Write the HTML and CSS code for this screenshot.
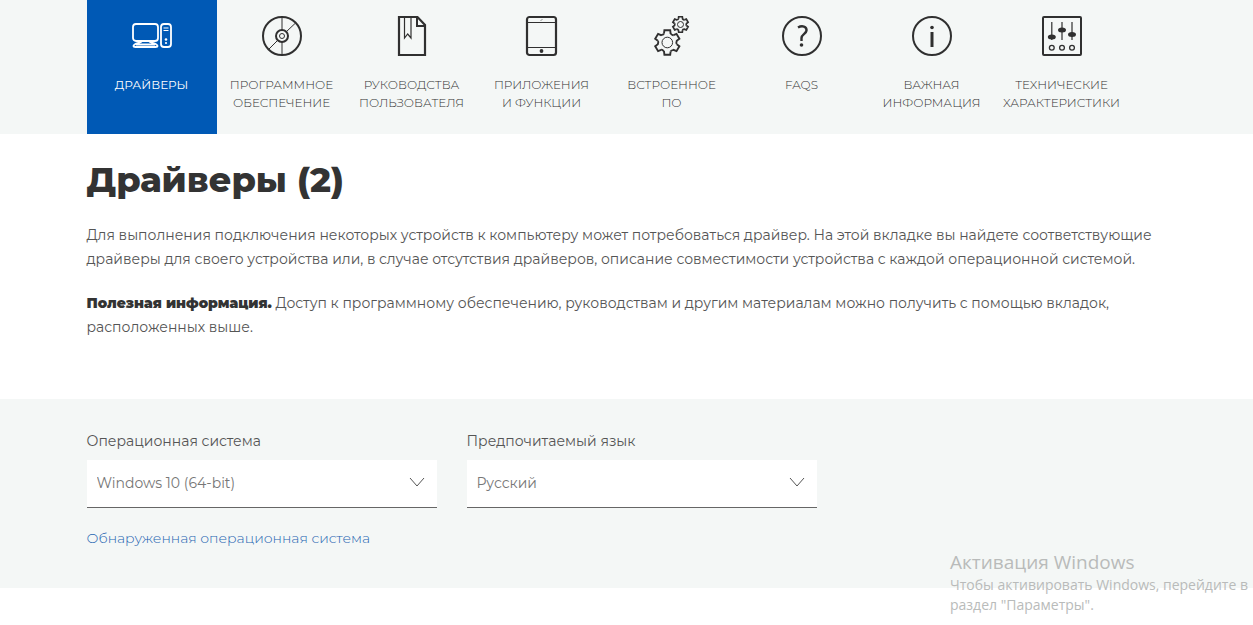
FILE: index.html
```html
<!DOCTYPE html>
<html lang="ru">
<head>
<meta charset="utf-8">
<meta name="viewport" content="width=device-width, initial-scale=1">
<title>Драйверы</title>
<link rel="stylesheet" href="styles.css">
</head>
<body>
<nav class="tabs">
  <div class="container tabs-row">
    <a class="tab tab-active" href="#drivers" aria-current="page">
      <svg class="icon" viewBox="0 0 40 40" aria-hidden="true"><g stroke-width="1.8"><rect x="1" y="8" width="25" height="17" rx="3"/><path d="M10 25c-1 2-8 2-8.500 5 0 1 1 1 2 1h20c1 0 2 0 2-1-.5-3-7.500-3-8.500-5M4 28.500h19"/><rect x="29" y="8" width="10" height="23" rx="3"/></g><path d="M31.500 12h5M31.500 14.500h5" stroke-width="1.200"/><circle class="solid" cx="34" cy="23.500" r="1.300"/><circle class="solid" cx="34" cy="27" r="1.100"/></svg>
      <span>Драйверы</span>
    </a>
    <a class="tab" href="#software">
      <svg class="icon" viewBox="0 0 40 40" aria-hidden="true"><circle cx="20" cy="20" r="19" stroke-width="2"/><circle cx="20" cy="20" r="6" stroke-width="2"/><circle cx="20" cy="20" r="2.500" stroke-width="1"/><path d="M20 1v13M20 26v13M33 7.500l-9 8.500M16 24l-9 9" stroke-width="1"/></svg>
      <span>Программное<br>обеспечение</span>
    </a>
    <a class="tab" href="#manuals">
      <svg class="icon" viewBox="0 0 40 40" aria-hidden="true"><path d="M7 1h18.500l7.500 8v30H7z" stroke-width="2.200"/><path d="M25 1v9h8" stroke-width="2"/><path d="M12.500 2v20l3.200-4 3.300 4V2" stroke-width="1.200"/></svg>
      <span>Руководства<br>пользователя</span>
    </a>
    <a class="tab" href="#apps">
      <svg class="icon" viewBox="0 0 40 40" aria-hidden="true"><rect x="5" y="1" width="29" height="38" rx="2.500" stroke-width="2.200"/><path d="M6 6.500h28M6 31.500h28" stroke-width="1"/><path d="M19 4.500l1-1" stroke-width="1"/><circle class="solid" cx="19.500" cy="35" r="1.900"/></svg>
      <span>Приложения<br>и функции</span>
    </a>
    <a class="tab" href="#firmware">
      <svg class="icon" viewBox="0 0 40 40" aria-hidden="true">
        <defs><path id="tooth" d="M-3.300-9L-2.900-12.300H2.900L3.300-9Q5-7 6.140-7.360"/>
        <g id="gear"><use href="#tooth"/><use href="#tooth" transform="rotate(60)"/><use href="#tooth" transform="rotate(120)"/><use href="#tooth" transform="rotate(180)"/><use href="#tooth" transform="rotate(240)"/><use href="#tooth" transform="rotate(300)"/></g></defs>
        <g transform="translate(15.300 26.500)"><use href="#gear" stroke-width="1.900"/><circle r="5.300" stroke-width="1"/></g>
        <g transform="translate(28.500 8.500)"><use href="#gear" transform="scale(.63)" stroke-width="2.700"/><circle r="3" stroke-width="1"/></g>
      </svg>
      <span>Встроенное<br>ПО</span>
    </a>
    <a class="tab" href="#faqs">
      <svg class="icon" viewBox="0 0 40 40" aria-hidden="true"><circle cx="20" cy="20" r="19" stroke-width="2"/><path d="M16 11.500c4-2.300 9-1.200 8.500 3-.4 3.500-5 4-5 7.500V25" stroke-width="2.400"/><circle class="solid" cx="19.500" cy="29" r="1.800"/></svg>
      <span>FAQs</span>
    </a>
    <a class="tab" href="#important">
      <svg class="icon" viewBox="0 0 40 40" aria-hidden="true"><circle cx="20" cy="20" r="19" stroke-width="2"/><path d="M20 16v15" stroke-width="3"/><circle class="solid" cx="20" cy="11.500" r="1.800"/></svg>
      <span>Важная<br>информация</span>
    </a>
    <a class="tab" href="#specs">
      <svg class="icon" viewBox="0 0 40 40" aria-hidden="true"><rect x="1" y="1" width="38" height="38" rx="1" stroke-width="2"/><path d="M9.800 6v18M20 6v18M30 6v18" stroke-width="1.200"/><g class="solid"><ellipse cx="9.800" cy="21" rx="4" ry="2.500"/><ellipse cx="20" cy="14" rx="4" ry="2.500"/><ellipse cx="30" cy="18.500" rx="4" ry="2.500"/></g><g stroke-width="1.300"><circle cx="9.800" cy="31.700" r="2.400"/><circle cx="20" cy="31.700" r="2.400"/><circle cx="30" cy="31.700" r="2.400"/></g></svg>
      <span>Технические<br>характеристики</span>
    </a>
  </div>
</nav>
<main>
  <section class="container intro" id="drivers">
    <h1>Драйверы (2)</h1>
    <p>Для выполнения подключения некоторых устройств к компьютеру может потребоваться драйвер. На этой вкладке вы найдете соответствующие драйверы для своего устройства или, в случае отсутствия драйверов, описание совместимости устройства с каждой операционной системой.</p>
    <p><strong>Полезная информация.</strong> Доступ к программному обеспечению, руководствам и другим материалам можно получить с помощью вкладок, расположенных выше.</p>
  </section>
  <section class="filters">
    <div class="container filters-row">
      <div class="field">
        <label for="os">Операционная система</label>
        <div class="select-box">
          <select id="os"><option>Windows 10 (64-bit)</option></select>
          <svg class="chevron" viewBox="0 0 16 10" aria-hidden="true"><path d="M1 1l7 8 7-8"/></svg>
        </div>
        <a class="detected" href="#os">Обнаруженная операционная система</a>
      </div>
      <div class="field">
        <label for="language">Предпочитаемый язык</label>
        <div class="select-box">
          <select id="language"><option>Русский</option></select>
          <svg class="chevron" viewBox="0 0 16 10" aria-hidden="true"><path d="M1 1l7 8 7-8"/></svg>
        </div>
      </div>
    </div>
  </section>
</main>
<aside class="activation">
  <p class="activation-title">Активация Windows</p>
  <p>Чтобы активировать Windows, перейдите в<br>раздел "Параметры".</p>
</aside>
</body>
</html>
```
FILE: styles.css
```css
* { box-sizing: border-box; }
body {
  margin: 0;
  background: #fff;
  color: #555;
  font: 400 14px/24px Montserrat, Inter, "Open Sans", sans-serif;
}
.container { max-width: 1080px; margin: 0 auto; }
.tabs { background: #f4f7f6; }
.tabs-row { display: flex; }
.tab {
  flex: 0 1 130px;
  display: flex;
  flex-direction: column;
  align-items: center;
  gap: 20px;
  padding: 16px 0 22px;
  color: #333;
  font-size: 12px;
  font-weight: 300;
  line-height: 18px;
  text-align: center;
  text-decoration: none;
  text-transform: uppercase;
}
.tab-active { background: #0059b5; color: #fff; font-weight: 400; }
.icon { width: 40px; height: 40px; fill: none; stroke: #303030; overflow: visible; }
.tab-active .icon { stroke: #fff; }
.solid { fill: #303030; stroke: none; }
.tab-active .solid { fill: #fff; }
.intro { padding: 24px 0 60px; }
h1 { margin: 0 0 21px; color: #333; font-size: 35px; line-height: 44px; font-weight: 800; }
.intro p { margin: 0; }
.intro p + p { margin-top: 20px; }
strong { color: #333; font-weight: 900; }
.filters { background: #f4f7f6; padding: 30px 0 38px; }
.filters-row { display: flex; gap: 30px; }
.field { flex: 0 1 350px; display: flex; flex-direction: column; align-items: flex-start; }
label { margin-bottom: 7px; }
.select-box { position: relative; width: 100%; }
select {
  display: block;
  width: 100%;
  height: 48px;
  padding: 0 40px 2px 10px;
  appearance: none;
  border: 0;
  border-bottom: 1px solid #666;
  border-radius: 0;
  background: #fff;
  color: #777;
  font: inherit;
}
.chevron {
  position: absolute;
  right: 12px;
  top: 17px;
  width: 16px;
  height: 10px;
  fill: none;
  stroke: #555;
  stroke-width: 1;
  pointer-events: none;
}
.detected { margin-top: 18px; color: #2766b2; font-weight: 300; text-decoration: none; }
.activation {
  position: absolute;
  right: 0;
  top: 549px;
  width: 303px;
  color: #b9bbba;
  font: 400 14px/20px "Segoe UI", "Open Sans", sans-serif;
  white-space: nowrap;
}
.activation p { margin: 0; }
.activation .activation-title { font-size: 19px; line-height: 26px; }
```
